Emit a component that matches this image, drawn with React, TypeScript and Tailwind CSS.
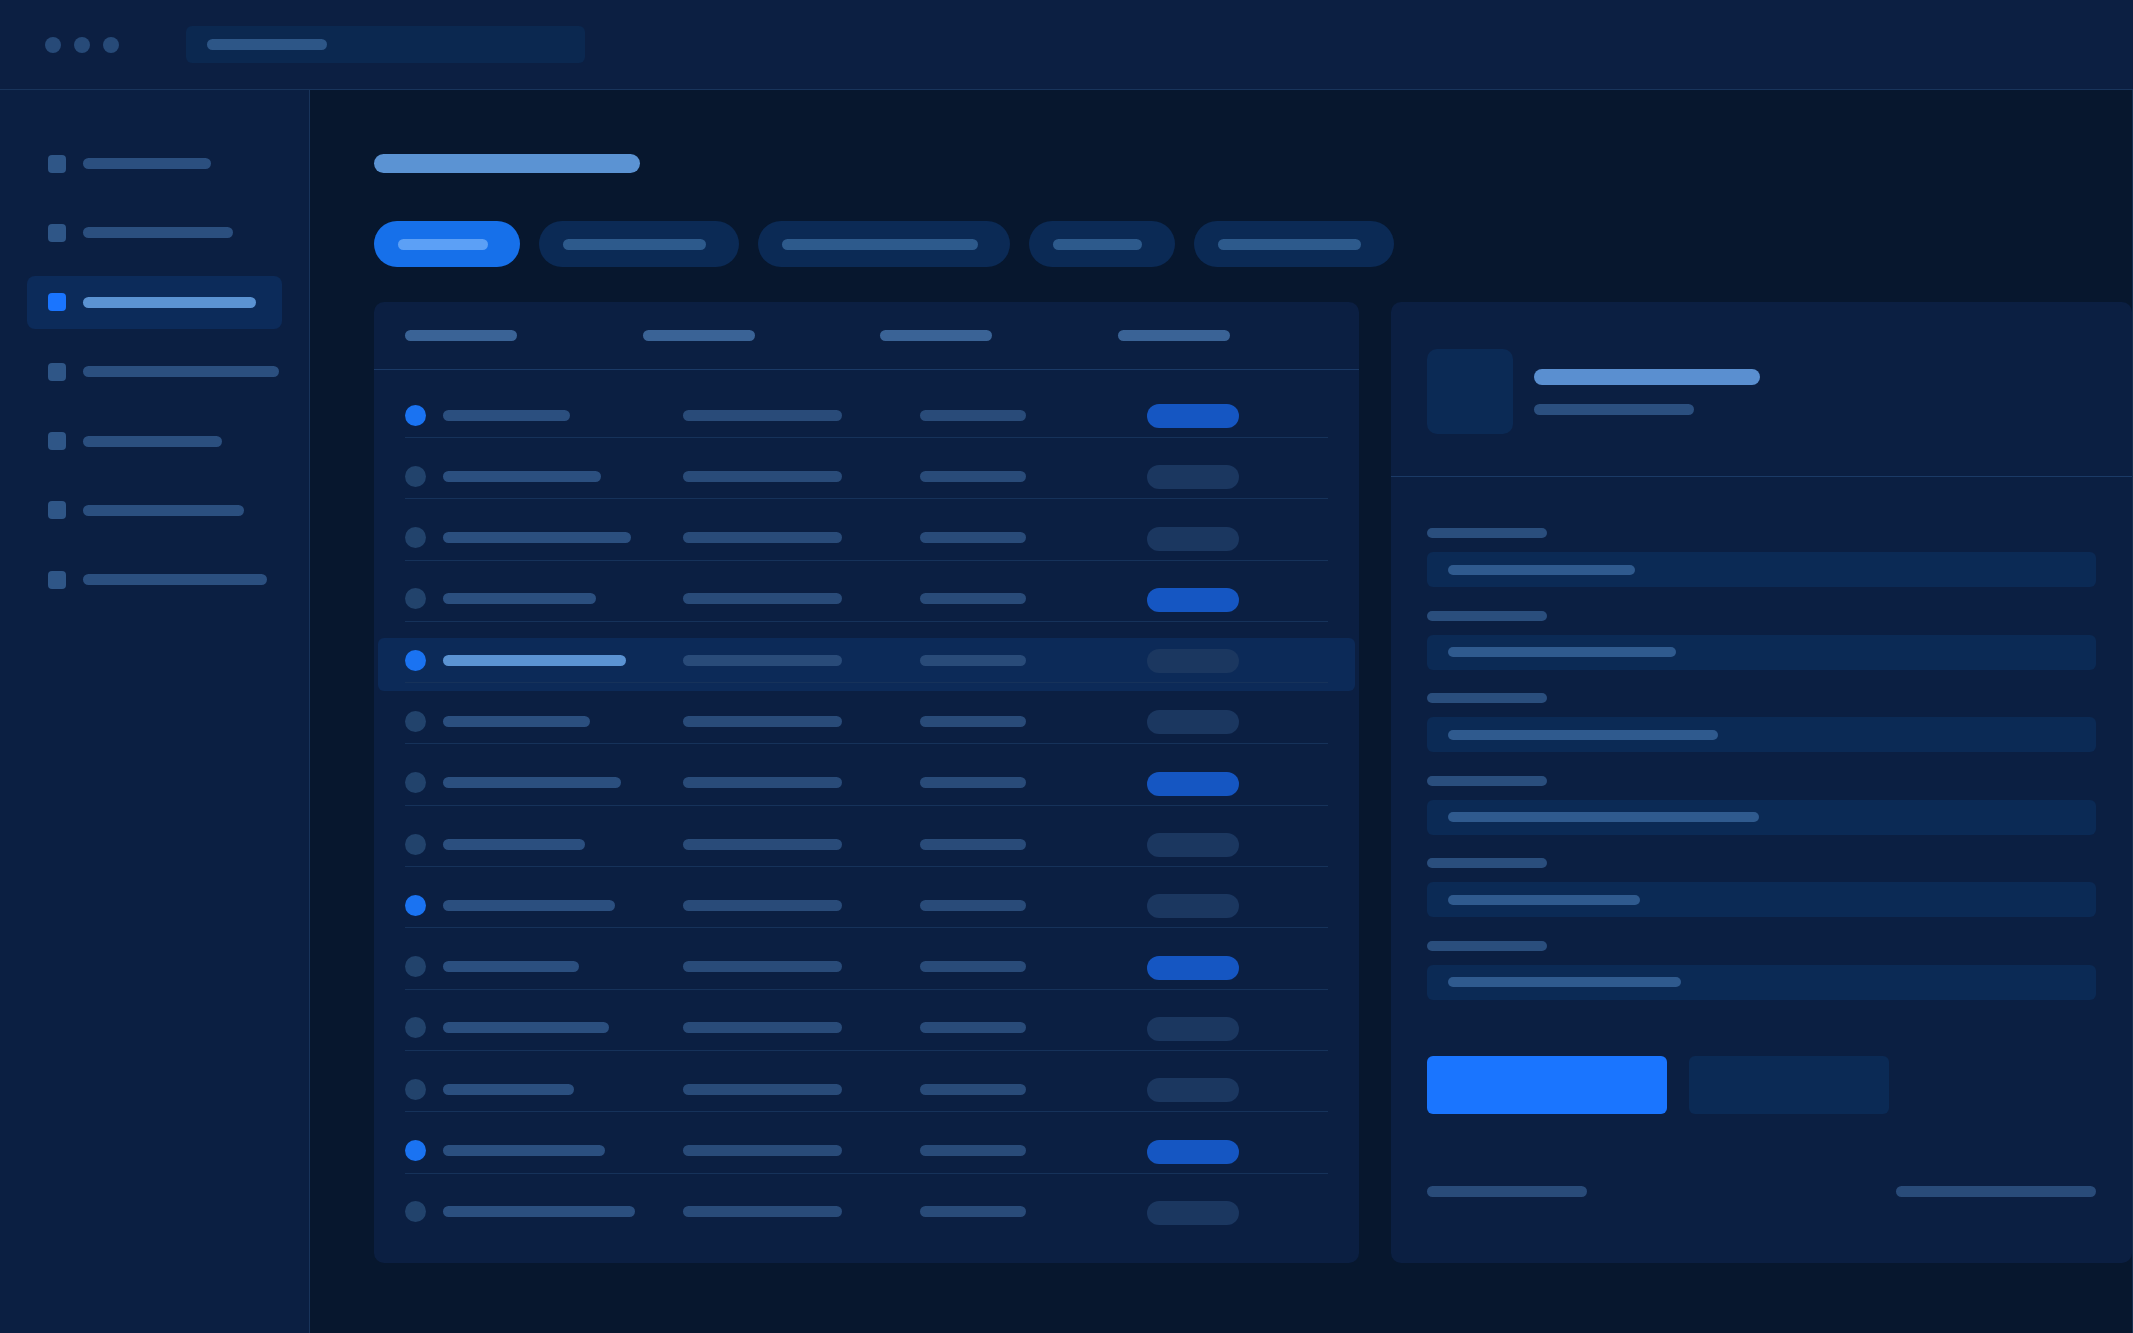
import type React from "react"

const navWidths = [128, 150, 173, 196, 139, 161, 184]
const tabs = [
  { w: 146, bar: 90 },
  { w: 200, bar: 143 },
  { w: 252, bar: 196 },
  { w: 146, bar: 89 },
  { w: 200, bar: 143 },
]
const nameWidths = [127, 158, 188, 153, 183, 147, 178, 142, 172, 136, 166, 131, 162, 192]
const fieldWidths = [187, 228, 270, 311, 192, 233]

const Bar: React.FC<{ w: number; className?: string }> = ({ w, className }) => (
  <div className={"h-[11px] shrink-0 rounded-full " + (className ?? "bg-[#2b4f7f]")} style={{ width: w }} />
)

const TopBar = () => (
  <header className="flex h-[90px] shrink-0 items-center border-b border-[#19345b] bg-[#0c1f42]">
    <div className="flex gap-[13px] pl-[45px]">
      <span className="h-[16px] w-[16px] rounded-full bg-[#274a78]" />
      <span className="h-[16px] w-[16px] rounded-full bg-[#274a78]" />
      <span className="h-[16px] w-[16px] rounded-full bg-[#274a78]" />
    </div>
    <div className="ml-[67px] flex h-[37px] w-[399px] items-center rounded-md bg-[#0b2850] pl-[21px]">
      <Bar w={120} className="bg-[#2d5687]" />
    </div>
  </header>
)

const Sidebar = () => (
  <aside className="flex w-[310px] shrink-0 flex-col gap-[16.4px] border-r border-[#19345b] bg-[#0b1f42] pt-[47px]">
    {navWidths.map((w, i) => {
      const active = i === 2
      return (
        <div
          key={i}
          className={
            "mx-[27px] flex h-[53px] w-[255px] items-center gap-[17px] rounded-lg px-[21px] " +
            (active ? "bg-[#0c2b5a]" : "")
          }
        >
          <span
            className={"h-[18px] w-[18px] shrink-0 rounded-[4px] " + (active ? "bg-[#1a75ff]" : "bg-[#2f5687]")}
          />
          <Bar w={w} className={active ? "bg-[#5b93d3]" : "bg-[#2b4f7f]"} />
        </div>
      )
    })}
  </aside>
)

const Tabs = () => (
  <div className="mt-[48px] flex gap-[19px]">
    {tabs.map((t, i) => (
      <div
        key={i}
        className={
          "flex h-[46px] items-center rounded-full pl-[24px] " + (i === 0 ? "bg-[#1670ea]" : "bg-[#0b2a55]")
        }
        style={{ width: t.w }}
      >
        <Bar w={t.bar} className={i === 0 ? "bg-[#5ca0f6]" : "bg-[#2d5a8c]"} />
      </div>
    ))}
  </div>
)

const Table = () => (
  <section className="h-[961px] w-[985px] shrink-0 rounded-[10px] bg-[#0b1f42]">
    <div className="flex h-[68px] items-center border-b border-[#1b3a66] pl-[31px]">
      {[0, 1, 2, 3].map((c) => (
        <div key={c} className="w-[237.5px]">
          <Bar w={112} className="bg-[#3a6396]" />
        </div>
      ))}
    </div>
    <div className="pt-[14px]">
      {nameWidths.map((w, i) => {
        const dot = i % 4 === 0
        const pill = i % 3 === 0
        const hl = i === 4
        const last = i === nameWidths.length - 1
        return (
          <div key={i} className="h-[61.3px] pt-[8px]">
            <div className={"mx-[4px] h-[53px] rounded-md " + (hl ? "bg-[#0c2a58]" : "")}>
              <div className="mt-[1px] flex h-[44px] items-center px-[27px]">
                <div className="flex w-[278px] items-center gap-[17px]">
                  <span
                    className={"h-[21px] w-[21px] shrink-0 rounded-full " + (dot ? "bg-[#1a73f2]" : "bg-[#22436c]")}
                  />
                  <Bar w={w} className={hl ? "bg-[#5b93d3]" : "bg-[#2b4f7f]"} />
                </div>
                <div className="w-[237px]">
                  <Bar w={159} className="bg-[#294b79]" />
                </div>
                <div className="w-[227px]">
                  <Bar w={106} className="bg-[#294b79]" />
                </div>
                <span
                  className={"mt-[2px] h-[24px] w-[92px] rounded-full " + (pill ? "bg-[#1556c2]" : "bg-[#1b3760]")}
                />
              </div>
              {!last && <div className="mx-[27px] h-px bg-[#16325a]" />}
            </div>
          </div>
        )
      })}
    </div>
  </section>
)

const Panel = () => (
  <section className="h-[961px] flex-1 rounded-[10px] bg-[#0b1f42]">
    <div className="flex items-center gap-[21px] border-b border-[#1b3a66] px-[36px] pb-[42px] pt-[47px]">
      <div className="h-[85px] w-[86px] rounded-[10px] bg-[#0b2a55]" />
      <div className="flex flex-col gap-[19px]">
        <div className="h-[16px] w-[226px] rounded-full bg-[#5a8fd0]" />
        <Bar w={160} className="bg-[#2b4f7f]" />
      </div>
    </div>
    <div className="flex flex-col gap-[23.5px] px-[36px] pt-[51px]">
      {fieldWidths.map((w, i) => (
        <div key={i}>
          <div className="h-[10px] w-[120px] rounded-full bg-[#2a4e7d]" />
          <div className="mt-[14px] flex h-[35px] items-center rounded-md bg-[#0b2a55] pl-[21px]">
            <div className="h-[10px] rounded-full bg-[#2f5a8e]" style={{ width: w }} />
          </div>
        </div>
      ))}
    </div>
    <div className="mt-[56px] flex gap-[22px] px-[36px]">
      <div className="h-[58px] w-[240px] rounded-md bg-[#1a75ff]" />
      <div className="h-[58px] w-[200px] rounded-md bg-[#0b2a55]" />
    </div>
    <div className="mt-[72px] flex justify-between px-[36px]">
      <Bar w={160} className="bg-[#294b79]" />
      <Bar w={200} className="bg-[#294b79]" />
    </div>
  </section>
)

export default function App() {
  return (
    <div className="flex h-screen w-full flex-col overflow-hidden bg-[#07172e] font-['Inter',sans-serif]">
      <TopBar />
      <div className="flex min-h-0 flex-1">
        <Sidebar />
        <main className="flex-1 border-r border-[#15304f] pl-[64px] pt-[64px]">
          <div className="h-[19px] w-[266px] rounded-full bg-[#5b93d3]" />
          <Tabs />
          <div className="mt-[35px] flex gap-[32px]">
            <Table />
            <Panel />
          </div>
        </main>
      </div>
    </div>
  )
}
